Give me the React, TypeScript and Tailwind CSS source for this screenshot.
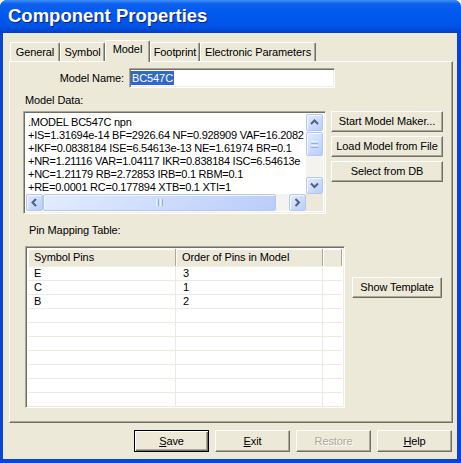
import React from "react";

const raised =
  "border border-t-white border-l-white border-b-[#716F64] border-r-[#716F64] shadow-[inset_-1px_-1px_0_#ACA899]";
const sunken =
  "border border-t-[#ACA899] border-l-[#ACA899] border-b-white border-r-white shadow-[inset_1px_1px_0_#716F64,inset_-1px_-1px_0_#F1EFE2]";

function Button(props: {
  children: React.ReactNode;
  className?: string;
  isDefault?: boolean;
  disabled?: boolean;
}) {
  const face = props.isDefault
    ? "border border-black shadow-[inset_1px_1px_0_#fff,inset_-1px_-1px_0_#716F64,inset_-2px_-2px_0_#ACA899]"
    : raised;
  const text = props.disabled
    ? "text-[#ACA899] [text-shadow:1px_1px_0_#fff]"
    : "text-black";
  return (
    <div
      className={`flex items-center justify-center bg-[#ECE9D8] ${face} ${text} ${props.className ?? ""}`}
    >
      {props.children}
    </div>
  );
}

function Arrow(props: { dir: "up" | "down" | "left" | "right" }) {
  const d = {
    up: "M1 5 L4.5 1.5 L8 5",
    down: "M1 1.5 L4.5 5 L8 1.5",
    left: "M5 1 L1.5 4.5 L5 8",
    right: "M1.5 1 L5 4.5 L1.5 8",
  }[props.dir];
  const vertical = props.dir == "up" || props.dir == "down";
  return (
    <svg
      width={vertical ? 9 : 7}
      height={vertical ? 7 : 9}
      viewBox={vertical ? "0 0 9 7" : "0 0 7 9"}
    >
      <path d={d} stroke="#4D6185" strokeWidth="2" fill="none" />
    </svg>
  );
}

function ScrollBtn(props: { dir: "up" | "down" | "left" | "right" }) {
  return (
    <div className="w-[17px] h-[17px] shrink-0 rounded-[2px] border border-[#B3C7F3] bg-[linear-gradient(135deg,#E3ECFF,#B9CDFA)] shadow-[inset_1px_1px_0_#F4F8FF] flex items-center justify-center">
      <Arrow dir={props.dir} />
    </div>
  );
}

const thumb =
  "rounded-[2px] border border-[#B3C7F3] bg-[linear-gradient(135deg,#E3ECFF,#B9CDFA)] shadow-[inset_1px_1px_0_#F4F8FF] flex items-center justify-center";

// last visible chars are clipped by the scrollbar in the original
const modelLines = [
  ".MODEL BC547C npn",
  "+IS=1.31694e-14 BF=2926.64 NF=0.928909 VAF=16.2082",
  "+IKF=0.0838184 ISE=6.54613e-13 NE=1.61974 BR=0.1",
  "+NR=1.21116 VAR=1.04117 IKR=0.838184 ISC=6.54613e",
  "+NC=1.21179 RB=2.72853 IRB=0.1 RBM=0.1",
  "+RE=0.0001 RC=0.177894 XTB=0.1 XTI=1",
];

const pins = [
  ["E", "3"],
  ["C", "1"],
  ["B", "2"],
  ["", ""],
  ["", ""],
  ["", ""],
  ["", ""],
  ["", ""],
  ["", ""],
  ["", ""],
];

function Tab(props: { label: string; w: string; selected?: boolean }) {
  if (props.selected) {
    return (
      <div
        className={`${props.w} h-[22px] -mb-[1px] relative z-10 bg-[#ECE9D8] border-t border-l border-t-white border-l-white border-r border-r-[#716F64] shadow-[inset_-1px_0_0_#ACA899] rounded-t-[2px] flex items-start justify-center pt-[2px]`}
      >
        {props.label}
      </div>
    );
  }
  return (
    <div
      className={`${props.w} h-[19px] bg-[#ECE9D8] border-t border-l border-t-white border-l-white border-r border-r-[#716F64] shadow-[inset_-1px_0_0_#ACA899] rounded-t-[2px] flex items-center justify-center pt-[1px]`}
    >
      {props.label}
    </div>
  );
}

export default function App() {
  return (
    <div className="w-[461px] h-[463px] flex flex-col bg-[#0A44D6] rounded-t-[7px] overflow-hidden font-['Liberation_Sans',Arial,sans-serif] text-[11px] leading-[13px] text-black tracking-[-0.1px]">
      {/* title bar */}
      <div className="h-[33px] shrink-0 flex items-center pl-[8px] bg-[linear-gradient(to_bottom,#3D8FF8_0%,#0C60EC_12%,#0058EE_45%,#0054E6_80%,#003FC8_100%)]">
        <span className="text-white font-bold text-[18.5px] leading-none tracking-normal [text-shadow:1px_1px_0_#0A1E84]">
          Component Properties
        </span>
      </div>

      <div className="flex-1 ml-[3px] mr-[4px] mb-[4px] bg-[#ECE9D8] flex flex-col pl-[6px] pt-[7px]">
        {/* tabs */}
        <div className="h-[21px] flex items-end pl-[1px]">
          <Tab label="General" w="w-[50px]" />
          <Tab label="Symbol" w="w-[45px]" />
          <Tab label="Model" w="w-[45px]" selected />
          <Tab label="Footprint" w="w-[50px]" />
          <Tab label="Electronic Parameters" w="w-[116px]" />
        </div>

        {/* panel */}
        <div className="w-[444px] h-[362px] border border-t-white border-l-white border-b-[#716F64] border-r-[#716F64] shadow-[inset_-1px_-1px_0_#ACA899] flex flex-col">
          <div className="mt-[6px] flex items-center h-[20px]">
            <div className="w-[114px] text-right">Model Name:</div>
            <div className={`ml-[5px] w-[206px] h-[20px] bg-white ${sunken} flex items-center pl-[1px]`}>
              <span className="bg-[#316AC5] text-white px-[1px] leading-[14px]">BC547C</span>
            </div>
          </div>

          <div className="mt-[6px] ml-[15px]">Model Data:</div>

          <div className="mt-[4px] flex items-start">
            <div className={`ml-[13px] w-[303px] h-[103px] bg-white ${sunken} p-[2px] flex flex-col`}>
              <div className="flex h-[82px]">
                <div className="flex-1 overflow-hidden whitespace-pre pl-[2px] pt-[2px] tracking-[-0.25px]">
                  {modelLines.map((l) => (
                    <div key={l}>{l}</div>
                  ))}
                </div>
                <div className="w-[17px] flex flex-col bg-[#F4F3EE]">
                  <ScrollBtn dir="up" />
                  <div className={`h-[24px] mt-[1px] ${thumb} flex-col gap-[1px]`}>
                    <div className="w-[7px] h-[1px] bg-[#EEF4FE]" />
                    <div className="w-[7px] h-[1px] bg-[#8CB0F8]" />
                    <div className="w-[7px] h-[1px] bg-[#EEF4FE]" />
                    <div className="w-[7px] h-[1px] bg-[#8CB0F8]" />
                  </div>
                  <div className="flex-1" />
                  <ScrollBtn dir="down" />
                </div>
              </div>
              <div className="flex h-[17px]">
                <div className="flex-1 flex bg-[#F4F3EE]">
                  <ScrollBtn dir="left" />
                  <div className={`w-[233px] ${thumb} gap-[1px]`}>
                    <div className="w-[1px] h-[7px] bg-[#EEF4FE]" />
                    <div className="w-[1px] h-[7px] bg-[#8CB0F8]" />
                    <div className="w-[1px] h-[7px] bg-[#EEF4FE]" />
                    <div className="w-[1px] h-[7px] bg-[#8CB0F8]" />
                  </div>
                  <div className="flex-1" />
                  <ScrollBtn dir="right" />
                </div>
                <div className="w-[17px] bg-[#ECE9D8]" />
              </div>
            </div>

            <div className="ml-[5px] w-[112px] flex flex-col gap-[4px]">
              <Button className="h-[21px]">Start Model Maker...</Button>
              <Button className="h-[21px]">Load Model from File</Button>
              <Button className="h-[21px]">Select from DB</Button>
            </div>
          </div>

          <div className="mt-[10px] ml-[19px]">Pin Mapping Table:</div>

          <div className="mt-[9px] flex items-start">
            <div className={`ml-[15px] w-[320px] h-[162px] bg-white ${sunken} p-[2px] overflow-hidden`}>
              <div className="flex h-[17px] bg-[#ECE9D8]">
                <div className="w-[148px] pl-[6px] flex items-center border-r border-r-[#ACA899] shadow-[inset_1px_1px_0_#fff]">
                  Symbol Pins
                </div>
                <div className="w-[147px] pl-[6px] flex items-center border-r border-r-[#ACA899] shadow-[inset_1px_1px_0_#fff]">
                  Order of Pins in Model
                </div>
                <div className="flex-1 border-r border-r-[#ACA899] shadow-[inset_1px_1px_0_#fff]" />
              </div>
              <div className="h-[1px] bg-[#F1EFE2]" />
              {pins.map((p, i) => (
                <div key={i} className="flex h-[14px] border-b border-b-[#ECEAE0]">
                  <div className="w-[148px] pl-[6px] border-r border-r-[#ECEAE0]">{p[0]}</div>
                  <div className="w-[147px] pl-[7px] border-r border-r-[#ECEAE0]">{p[1]}</div>
                  <div className="flex-1" />
                </div>
              ))}
            </div>
            <Button className="ml-[7px] mt-[31px] w-[90px] h-[21px]">Show Template</Button>
          </div>
        </div>

        {/* bottom buttons */}
        <div className="mt-[7px] ml-[125px] flex gap-[6px]">
          <Button isDefault className="w-[75px] h-[22px]">
            <span>
              <u>S</u>ave
            </span>
          </Button>
          <Button className="w-[75px] h-[22px]">
            <span>
              <u>E</u>xit
            </span>
          </Button>
          <Button disabled className="w-[75px] h-[22px]">
            Restore
          </Button>
          <Button className="w-[75px] h-[22px]">
            <span>
              <u>H</u>elp
            </span>
          </Button>
        </div>
      </div>
    </div>
  );
}
